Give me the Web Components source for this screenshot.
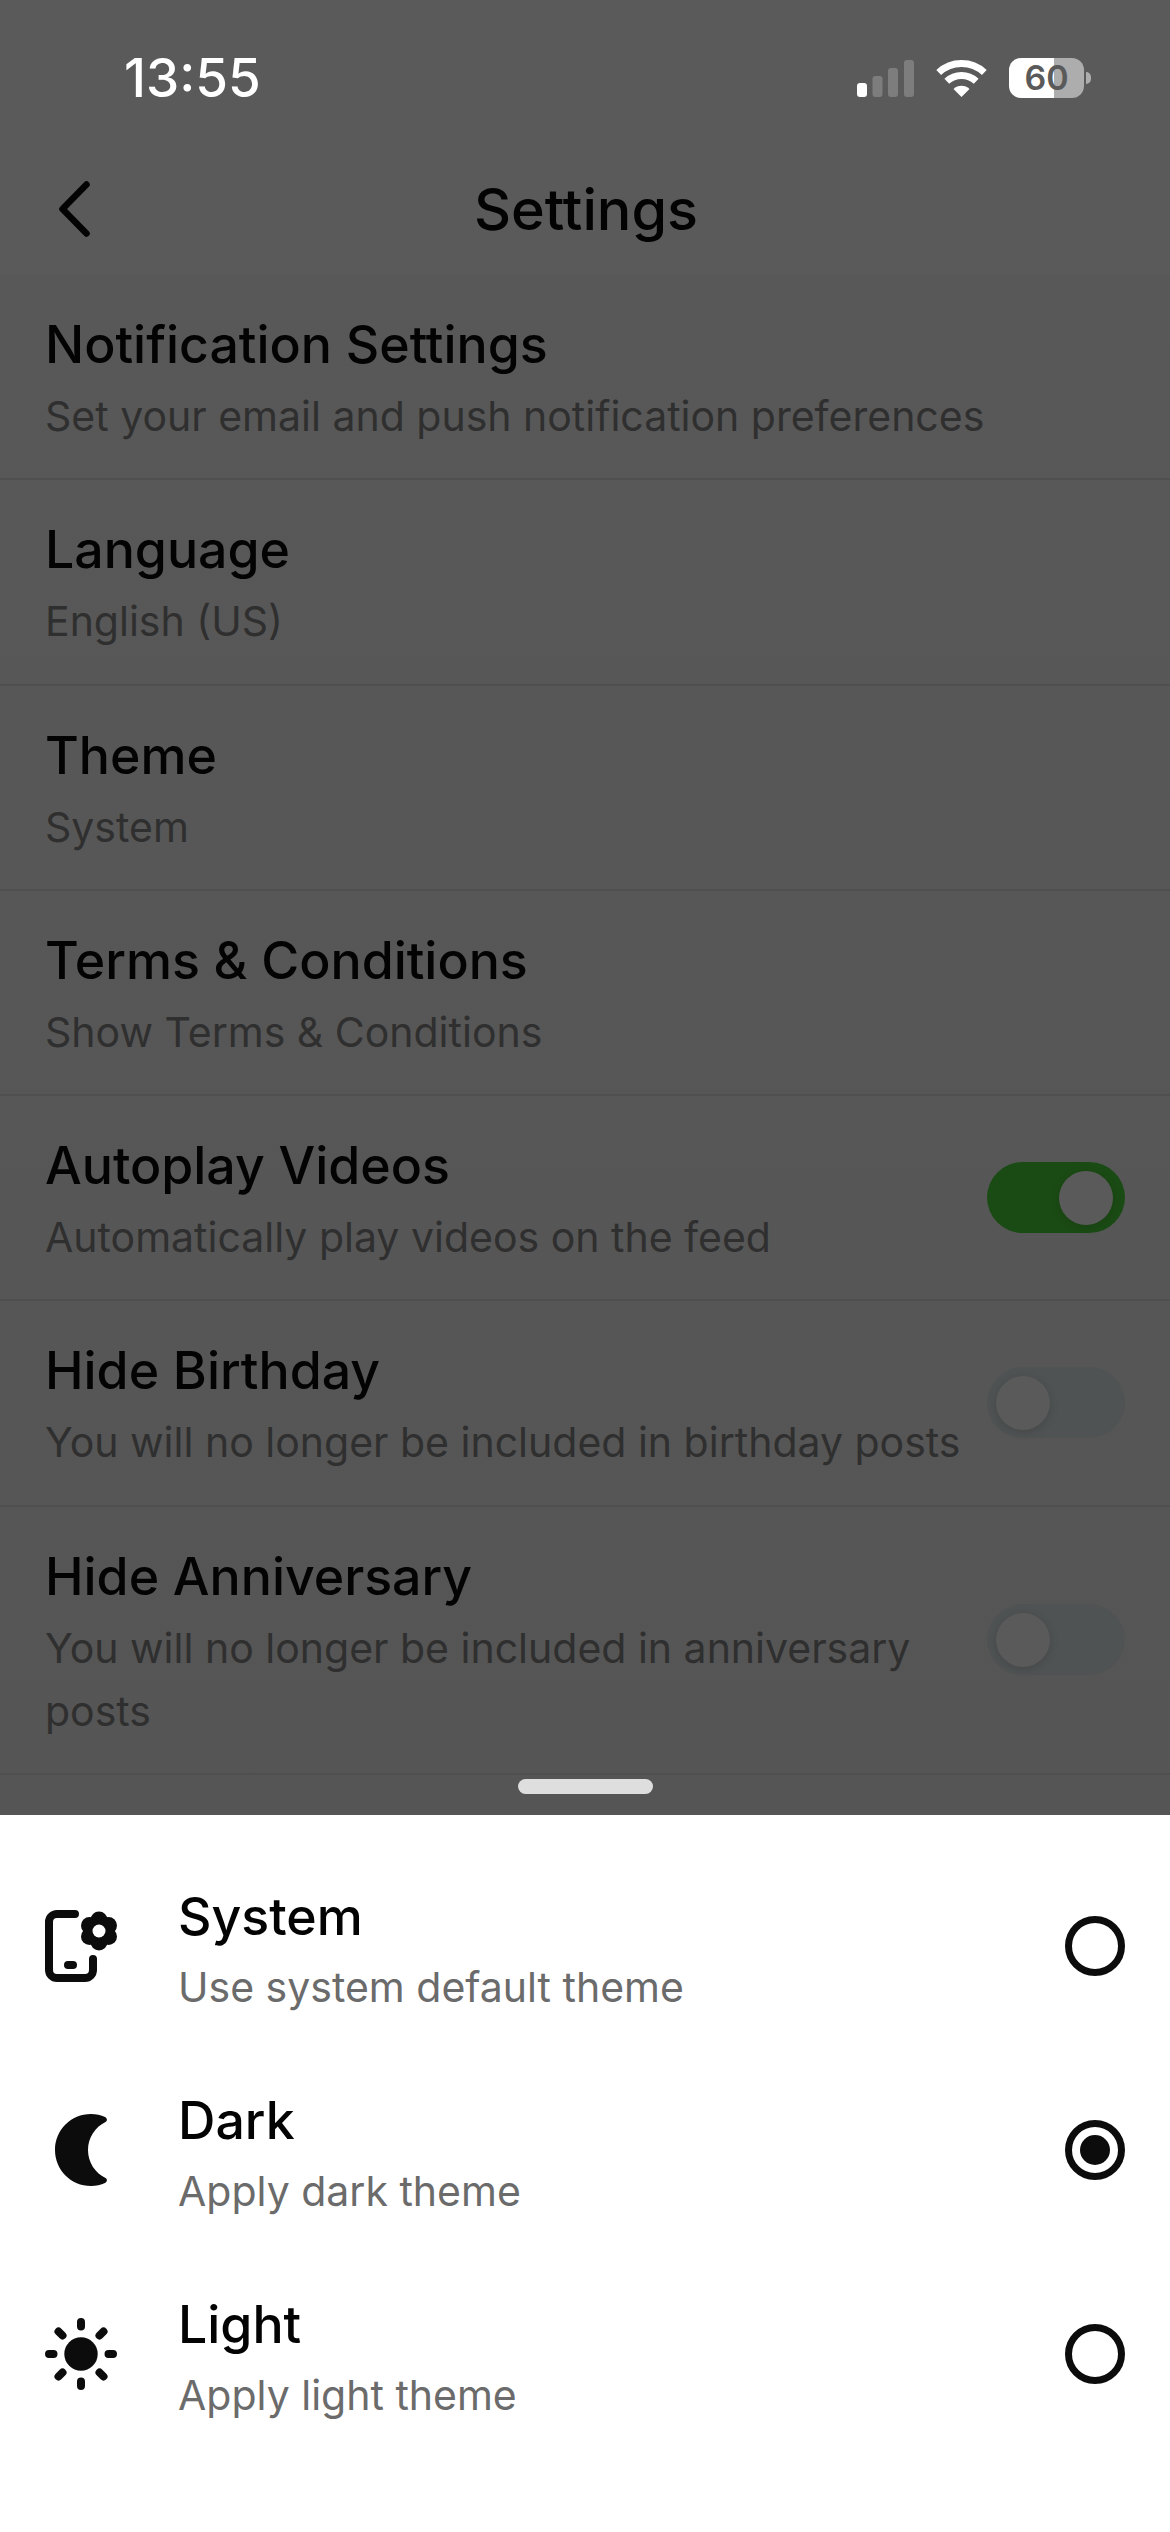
<!DOCTYPE html>
<html lang="en">
<head>
<meta charset="utf-8">
<title>Settings</title>
<style>
  html, body { margin: 0; padding: 0; }
  body { width: 1170px; height: 2532px; overflow: hidden; background: #5a5a5a; font-family: Inter, "Liberation Sans", sans-serif; }
  svg { display: block; }
</style>
</head>
<body>

<settings-screen>
  <status-bar time="13:55" battery="60"></status-bar>
  <nav-header>Settings</nav-header>
  <settings-list>
    <setting-row>
      <span slot="title">Notification Settings</span>
      <span slot="detail">Set your email and push notification preferences</span>
    </setting-row>
    <setting-row>
      <span slot="title">Language</span>
      <span slot="detail">English (US)</span>
    </setting-row>
    <setting-row>
      <span slot="title">Theme</span>
      <span slot="detail">System</span>
    </setting-row>
    <setting-row>
      <span slot="title">Terms &amp; Conditions</span>
      <span slot="detail">Show Terms &amp; Conditions</span>
    </setting-row>
    <setting-row>
      <span slot="title">Autoplay Videos</span>
      <span slot="detail">Automatically play videos on the feed</span>
      <toggle-switch slot="control" checked></toggle-switch>
    </setting-row>
    <setting-row>
      <span slot="title">Hide Birthday</span>
      <span slot="detail">You will no longer be included in birthday posts</span>
      <toggle-switch slot="control"></toggle-switch>
    </setting-row>
    <setting-row>
      <span slot="title">Hide Anniversary</span>
      <span slot="detail">You will no longer be included in anniversary posts</span>
      <toggle-switch slot="control"></toggle-switch>
    </setting-row>
  </settings-list>
  <bottom-sheet>
    <theme-option>
      <svg slot="icon" width="72" height="73" viewBox="0 0 72 73">
        <path d="M30 4H12a8 8 0 0 0-8 8V60a8 8 0 0 0 8 8H40a8 8 0 0 0 8-8V49" fill="none" stroke="#0c0c0c" stroke-width="8" stroke-linecap="round"/>
        <path d="M23 55h5" fill="none" stroke="#0c0c0c" stroke-width="8" stroke-linecap="round"/>
        <g fill="#0c0c0c">
          <circle cx="54" cy="21" r="12"/>
          <circle cx="54" cy="10" r="8.5"/>
          <circle cx="54" cy="32" r="8.5"/>
          <circle cx="44.5" cy="15.5" r="8.5"/>
          <circle cx="63.5" cy="15.5" r="8.5"/>
          <circle cx="44.5" cy="26.5" r="8.5"/>
          <circle cx="63.5" cy="26.5" r="8.5"/>
        </g>
        <circle cx="54" cy="21" r="6.5" fill="#fff"/>
      </svg>
      <span slot="title">System</span>
      <span slot="detail">Use system default theme</span>
    </theme-option>
    <theme-option selected>
      <svg slot="icon" width="72" height="72" viewBox="0 0 72 72">
        <path d="M46 0C51 0 56 1 60 3C62.500 4.500 62.500 7 60.500 8C50 13 43 24 43 36C43 48 50 59 60.500 64C62.500 65 62.500 67.500 60 69C56 71 51 72 46 72C26 72 10 56 10 36C10 16 26 0 46 0Z" fill="#0c0c0c"/>
      </svg>
      <span slot="title">Dark</span>
      <span slot="detail">Apply dark theme</span>
    </theme-option>
    <theme-option>
      <svg slot="icon" width="72" height="72" viewBox="0 0 72 72">
        <circle cx="36" cy="36" r="16.700" fill="#0c0c0c"/>
        <path d="M36 4v4.500M36 63.500V68M4 36h4.500M63.500 36H68M13.500 13.500l4 4M54.500 54.500l4 4M58.500 13.500l-4 4M17.500 54.500l-4 4" fill="none" stroke="#0c0c0c" stroke-width="8" stroke-linecap="round"/>
      </svg>
      <span slot="title">Light</span>
      <span slot="detail">Apply light theme</span>
    </theme-option>
  </bottom-sheet>
</settings-screen>

<script>
  (function themeSheet(customElements) {
    'use strict';

    // small helper, every element here just stamps a string into an open root
    class Base extends HTMLElement {
      render(html) {
        this.attachShadow({mode: 'open'}).innerHTML = html;
      }
    }

    class SettingsScreen extends Base {
      constructor() {
        super();
        this.render(`
          <style>
            :host { display: flex; flex-direction: column; height: 2532px; background: #5a5a5a; }
          </style>
          <slot></slot>
        `);
      }
    }

    class StatusBar extends Base {
      constructor() {
        super();
        const time = this.getAttribute('time');
        const level = this.getAttribute('battery');
        this.render(`
          <style>
            :host { display: flex; align-items: center; justify-content: space-between; height: 156px; margin-bottom: -14px; padding: 0 79px 0 124px; box-sizing: border-box; }
            .time { color: #fff; font: 500 53px/1 Inter, sans-serif; }
            .icons { display: flex; align-items: center; gap: 22px; }
            .battery { display: flex; align-items: center; gap: 2px; }
            .cell {
              width: 75px; height: 40px; border-radius: 12px;
              background: linear-gradient(90deg, #fff ${level}%, #adadad ${level}%);
              color: #5a5a5a; font: 600 34px/40px Inter, sans-serif; text-align: center;
            }
            .cap { width: 5px; height: 12px; border-radius: 0 6px 6px 0; background: #adadad; }
          </style>
          <span class="time">${time}</span>
          <div class="icons">
            <svg width="57" height="37" viewBox="0 0 57 37">
              <rect x="0" y="23" width="10" height="14" rx="3" fill="#fff"/>
              <rect x="15.500" y="16" width="10" height="21" rx="3" fill="#7d7d7d"/>
              <rect x="31" y="8" width="10" height="29" rx="3" fill="#7d7d7d"/>
              <rect x="47" y="0" width="10" height="37" rx="3" fill="#7d7d7d"/>
            </svg>
            <svg width="51" height="37" viewBox="0 0 51 37">
              <path d="M2.700 12.500A33.500 33.500 0 0 1 48.300 12.500" fill="none" stroke="#fff" stroke-width="7"/>
              <path d="M10.800 21.300A21.500 21.500 0 0 1 40.200 21.300" fill="none" stroke="#fff" stroke-width="7"/>
              <path d="M25.500 37L17.500 29A11.500 11.500 0 0 1 33.500 29Z" fill="#fff"/>
            </svg>
            <div class="battery"><div class="cell">${level}</div><div class="cap"></div></div>
          </div>
        `);
      }
    }

    class NavHeader extends Base {
      constructor() {
        super();
        this.render(`
          <style>
            :host { display: grid; grid-template-columns: 1fr auto 1fr; align-items: center; height: 133px; padding: 0 58px 0 60px; box-sizing: border-box; }
            .title { color: #030303; font: 500 57.5px/72px Inter, sans-serif; }
            svg { margin-left: -2px; }
          </style>
          <svg width="34" height="56" viewBox="0 0 34 56">
            <path d="M28.500 3.500L4.500 28L28.500 52.500" fill="none" stroke="#030303" stroke-width="6.500" stroke-linecap="round" stroke-linejoin="round"/>
          </svg>
          <span class="title"><slot></slot></span>
          <span></span>
        `);
      }
    }

    class SettingsList extends Base {
      constructor() {
        super();
        this.render(`
          <style>
            :host { display: flex; flex-direction: column; flex: 1; background: linear-gradient(#585858, #555555); min-height: 0; }
          </style>
          <slot></slot>
        `);
      }
    }

    class SettingRow extends Base {
      constructor() {
        super();
        this.render(`
          <style>
            :host { display: flex; align-items: center; gap: 12px; padding: 33px 45px 30.3px; border-bottom: 2px solid #4f4f4f; }
            .text { flex: 1; min-width: 0; }
            .title { color: #030303; font: 500 51.8px/72px Inter, sans-serif; margin-bottom: 5px; }
            .detail { color: #2f2f2f; font: 400 41px/63px Inter, sans-serif; }
          </style>
          <div class="text">
            <div class="title"><slot name="title"></slot></div>
            <div class="detail"><slot name="detail"></slot></div>
          </div>
          <slot name="control"></slot>
        `);
      }
    }

    class ToggleSwitch extends Base {
      constructor() {
        super();
        this.render(`
          <style>
            :host { display: flex; align-items: center; flex: none; width: 138px; height: 71px; margin-top: -3px; border-radius: 36px; background: #505353; padding: 0 9px; box-sizing: border-box; }
            :host([checked]) { background: #1b4b14; padding: 0 12px; justify-content: flex-end; }
            .knob { width: 54px; height: 54px; border-radius: 50%; background: #5a5a5a; box-shadow: 0 2px 10px rgba(0, 0, 0, .14); }
          </style>
          <div class="knob"></div>
        `);
      }
    }

    class BottomSheet extends Base {
      constructor() {
        super();
        this.render(`
          <style>
            :host { display: block; position: relative; height: 717px; background: #fff; padding-top: 29px; box-sizing: border-box; flex: none; }
            .handle { position: absolute; left: 518px; top: -36px; width: 135px; height: 15px; border-radius: 8px; background: #dedede; }
          </style>
          <div class="handle"></div>
          <slot></slot>
        `);
      }
    }

    class ThemeOption extends Base {
      constructor() {
        super();
        this.render(`
          <style>
            :host { display: flex; align-items: center; height: 204px; padding: 0 45px; box-sizing: border-box; }
            .icon { flex: none; width: 72px; margin-right: 61px; }
            .text { flex: 1; min-width: 0; padding-top: 6px; }
            .title { color: #030303; font: 500 51.8px/72px Inter, sans-serif; margin-bottom: 4px; }
            .detail { color: #6b6b6b; font: 400 41px/63px Inter, sans-serif; }
            .radio { flex: none; width: 60px; height: 60px; box-sizing: border-box; border: 7px solid #0c0c0c; border-radius: 50%; display: flex; align-items: center; justify-content: center; }
            :host([selected]) .radio::after { content: ""; width: 30px; height: 30px; border-radius: 50%; background: #0c0c0c; }
          </style>
          <div class="icon"><slot name="icon"></slot></div>
          <div class="text">
            <div class="title"><slot name="title"></slot></div>
            <div class="detail"><slot name="detail"></slot></div>
          </div>
          <div class="radio"></div>
        `);
      }
    }

    customElements.define('settings-screen', SettingsScreen);
    customElements.define('status-bar', StatusBar);
    customElements.define('nav-header', NavHeader);
    customElements.define('settings-list', SettingsList);
    customElements.define('setting-row', SettingRow);
    customElements.define('toggle-switch', ToggleSwitch);
    customElements.define('bottom-sheet', BottomSheet);
    customElements.define('theme-option', ThemeOption);
  })(window.customElements);
</script>
</body>
</html>
